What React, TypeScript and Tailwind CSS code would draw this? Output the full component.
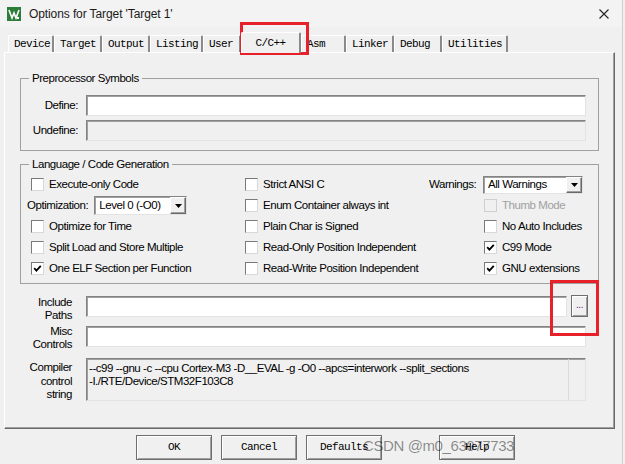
import { FC } from "react";
import clsx from "clsx";

const sunken =
  "border border-t-[#838383] border-l-[#838383] border-r-[#e3e3e3] border-b-[#e3e3e3] shadow-[inset_1px_1px_0_#a0a0a0]";
const raised =
  "border border-t-white border-l-white border-r-[#696969] border-b-[#696969] shadow-[inset_-1px_-1px_0_#a0a0a0]";

const tabs = [
  { name: "Device", w: "w-[46px]" },
  { name: "Target", w: "w-[48px]" },
  { name: "Output", w: "w-[48px]" },
  { name: "Listing", w: "w-[53px]" },
  { name: "User", w: "w-[38px]" },
  { name: "C/C++", w: "w-[60px]", active: true },
  { name: "Asm", w: "w-[45px]" },
  { name: "Linker", w: "w-[48px]" },
  { name: "Debug", w: "w-[48px]" },
  { name: "Utilities", w: "w-[66px]" },
];

const Check: FC<{ checked?: boolean; disabled?: boolean }> = ({ checked, disabled }) => (
  <span
    className={clsx(
      "flex h-[13px] w-[13px] shrink-0 items-center justify-center border",
      disabled
        ? "border-[#cfcfcf] bg-[#f0f0f0]"
        : "border-t-[#7a7a7a] border-l-[#7a7a7a] border-r-[#d8d8d8] border-b-[#d8d8d8] bg-white"
    )}
  >
    {checked && (
      <svg width="9" height="9" viewBox="0 0 9 9">
        <polyline points="1.2,4.2 3.4,6.6 7.8,1.8" fill="none" stroke="#000" strokeWidth="1.8" />
      </svg>
    )}
  </span>
);

const Option: FC<{ label: string; checked?: boolean; disabled?: boolean }> = ({
  label,
  checked,
  disabled,
}) => (
  <div className="flex h-[21px] items-center gap-[5px]">
    <Check checked={checked} disabled={disabled} />
    <span className={disabled ? "text-[#a0a0a0]" : "text-black"}>{label}</span>
  </div>
);

const Combo: FC<{ value: string; w: string; h: string }> = ({ value, w, h }) => (
  <div className={clsx("flex items-stretch bg-white", sunken, w, h)}>
    <span className="flex flex-1 items-center pl-[4px]">{value}</span>
    <span className={clsx("flex w-[16px] items-center justify-center bg-[#f0f0f0]", raised)}>
      <svg width="7" height="4" viewBox="0 0 7 4">
        <polygon points="0,0 7,0 3.5,4" fill="#000" />
      </svg>
    </span>
  </div>
);

const App: FC = () => {
  return (
    <div className="relative h-[464px] w-[625px] overflow-hidden bg-[#f0f0f0] font-['Liberation_Sans',sans-serif] text-[11.5px] tracking-[-0.45px] text-black">
      <div className="h-full w-[623px] border-r border-[#cfcfcf]">
        {/* title bar */}
        <div className="flex h-[27px] items-center bg-[#f3f3f3] pl-[7px] pr-[13px]">
          <svg width="14" height="14" viewBox="0 0 14 14">
            <rect width="14" height="14" fill="#2d7d3a" />
            <path d="M2 3 L5 11 L7 6 L9 11 L12 3" fill="none" stroke="#fff" strokeWidth="1.6" />
            <rect x="10" y="10" width="2" height="2" fill="#fff" />
          </svg>
          <span className="ml-[8px] flex-1 text-[12px] tracking-[-0.1px] text-[#1a1a1a]">
            Options for Target 'Target 1'
          </span>
          <svg width="10" height="10" viewBox="0 0 10 10">
            <path d="M0.5 0.5 L9.5 9.5 M9.5 0.5 L0.5 9.5" stroke="#222" strokeWidth="1.1" />
          </svg>
        </div>

        {/* tabs */}
        <div className="flex h-[25px] items-end pl-[8px] font-['Liberation_Mono',monospace] text-[11px] tracking-[-0.6px]">
          {tabs.map((t) => (
            <div
              key={t.name}
              className={clsx(
                "flex shrink-0 items-center rounded-t-[2px] border-l border-t border-r-2 border-l-white border-t-white border-r-[#8a8a8a]",
                t.w,
                t.active
                  ? "relative z-10 -mb-px h-[21px] justify-center bg-[#f0f0f0]"
                  : "h-[17px] pl-[5px]"
              )}
            >
              {t.name}
            </div>
          ))}
        </div>

        {/* panel */}
        <div className="ml-[4px] h-[377px] w-[611px] border border-t-white border-l-white border-r-[#696969] border-b-[#696969] px-[15px] pt-[18px] shadow-[inset_-1px_-1px_0_#a0a0a0]">
          <fieldset className="border border-[#a0a0a0] pb-[9px] pt-[10px]">
            <legend className="ml-[8px] px-[3px] leading-[14px]">Preprocessor Symbols</legend>
            <div className="flex flex-col gap-[4px]">
              <div className="flex items-center">
                <span className="w-[57px] text-right">Define:</span>
                <div className={clsx("ml-[8px] h-[21px] w-[500px] bg-white", sunken)} />
              </div>
              <div className="flex items-center">
                <span className="w-[57px] text-right">Undefine:</span>
                <div className={clsx("ml-[8px] h-[21px] w-[500px] bg-[#f0f0f0]", sunken)} />
              </div>
            </div>
          </fieldset>

          <fieldset className="mt-[6px] border border-[#a0a0a0] pb-[4px] pt-[3px]">
            <legend className="ml-[8px] px-[3px] leading-[14px]">Language / Code Generation</legend>
            <div className="grid grid-cols-[224px_184px_1fr]">
              <div className="flex flex-col pl-[10px]">
                <Option label="Execute-only Code" />
                <div className="-ml-[4px] flex h-[21px] items-center gap-[6px]">
                  <span>Optimization:</span>
                  <Combo value="Level 0 (-O0)" w="w-[93px]" h="h-[19px]" />
                </div>
                <Option label="Optimize for Time" />
                <Option label="Split Load and Store Multiple" />
                <Option label="One ELF Section per Function" checked />
              </div>
              <div className="flex flex-col">
                <Option label="Strict ANSI C" />
                <Option label="Enum Container always int" />
                <Option label="Plain Char is Signed" />
                <Option label="Read-Only Position Independent" />
                <Option label="Read-Write Position Independent" />
              </div>
              <div className="flex flex-col">
                <div className="flex h-[21px] items-center gap-[7px]">
                  <span className="w-[47px] text-right">Warnings:</span>
                  <Combo value="All Warnings" w="w-[100px]" h="h-[18px]" />
                </div>
                <div className="flex flex-col pl-[55px]">
                  <Option label="Thumb Mode" disabled />
                  <Option label="No Auto Includes" />
                  <Option label="C99 Mode" checked />
                  <Option label="GNU extensions" checked />
                </div>
              </div>
            </div>
          </fieldset>

          <div className="mt-[9px] flex h-[26px] items-center">
            <span className="mt-[5px] w-[52px] text-right leading-[13px]">
              Include
              <br />
              Paths
            </span>
            <div className={clsx("ml-[14px] h-[21px] w-[481px] bg-white", sunken)} />
            <button
              className={clsx(
                "ml-[4px] flex h-[22px] w-[17px] items-center justify-center bg-[#f0f0f0] pb-[3px] text-[10px] text-[#5a2c7a]",
                "border border-[#6e6e6e] shadow-[inset_1px_1px_0_white,inset_-1px_-1px_0_#a0a0a0]"
              )}
            >
              ...
            </button>
          </div>

          <div className="mt-[4px] flex h-[26px] items-center">
            <span className="mt-[4px] w-[52px] text-right leading-[13px]">
              Misc
              <br />
              Controls
            </span>
            <div className={clsx("ml-[14px] h-[21px] w-[500px] bg-white", sunken)} />
          </div>

          <div className="mt-[9px] flex items-start">
            <span className="w-[52px] pt-[3px] text-right leading-[13.5px]">
              Compiler
              <br />
              control
              <br />
              string
            </span>
            <div className={clsx("ml-[14px] flex h-[43px] w-[500px] bg-[#f0f0f0]", sunken)}>
              <div className="flex-1 pl-[2px] pt-[3px] leading-[13px]">
                --c99 --gnu -c --cpu Cortex-M3 -D__EVAL -g -O0 --apcs=interwork --split_sections
                <br />
                -I./RTE/Device/STM32F103C8
              </div>
              <div className="w-[17px] border-l border-[#dadada]" />
            </div>
          </div>
        </div>

        {/* buttons */}
        <div className="mt-[6px] flex pl-[136px] font-['Liberation_Mono',monospace] text-[11px] tracking-[-0.6px]">
          {[
            { t: "OK", ml: "" },
            { t: "Cancel", ml: "ml-[9px]" },
            { t: "Defaults", ml: "ml-[9px]" },
            { t: "Help", ml: "ml-[57px]" },
          ].map((b) => (
            <button
              key={b.t}
              className={clsx(
                "flex h-[25px] w-[76px] items-center justify-center bg-[#f0f0f0] border border-[#6e6e6e] shadow-[inset_1px_1px_0_white,inset_-1px_-1px_0_#a0a0a0]",
                b.ml
              )}
            >
              {b.t}
            </button>
          ))}
        </div>
      </div>

      {/* annotations */}
      <div className="absolute left-[240px] top-[22px] h-[33px] w-[69px] border-[3px] border-[#e8202a]" />
      <div className="absolute left-[550px] top-[280px] h-[56px] w-[49px] border-[3px] border-[#e8202a]" />
      <div className="absolute left-[363px] top-[438px] text-[15px] leading-none tracking-[-0.4px] text-black/45">
        CSDN @m0_63077733
      </div>
    </div>
  );
};

export default App;
